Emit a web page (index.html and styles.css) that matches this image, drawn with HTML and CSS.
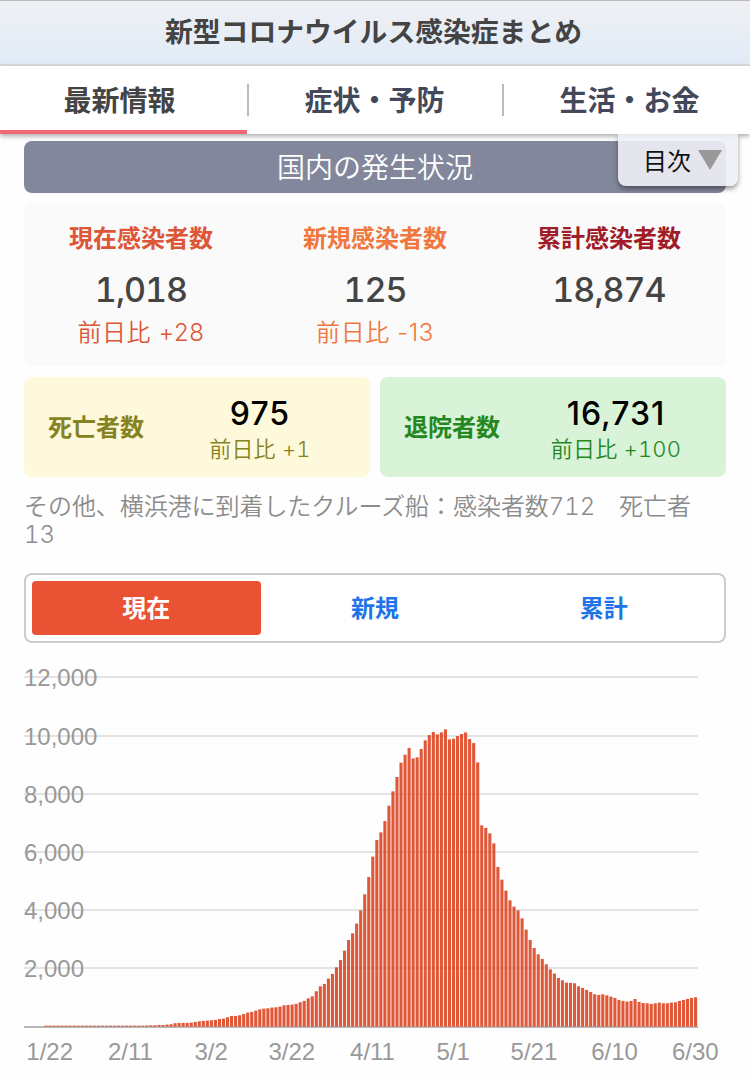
FILE: index.html
```
<!DOCTYPE html>
<html lang="ja">
<head>
  <meta charset="UTF-8" />
  <meta name="viewport" content="width=device-width, initial-scale=1" />
  <title>新型コロナウイルス感染症まとめ</title>
  <link rel="stylesheet" href="styles.css">
</head>
<body>
  <header>
    <h1>新型コロナウイルス感染症まとめ</h1>
  </header>

  <nav class="tabs">
    <a class="tab active">最新情報</a>
    <a class="tab">症状・予防</a>
    <a class="tab">生活・お金</a>
    <div class="toc">目次<svg width="24" height="20" viewBox="0 0 24 20"><path d="M0 0h24L12 20z" fill="#999"/></svg></div>
  </nav>

  <main>
    <h2>国内の発生状況</h2>

    <section class="summary">
      <div class="stat current">
        <h3>現在感染者数</h3>
        <p class="count">1,018</p>
        <p class="diff">前日比 +28</p>
      </div>
      <div class="stat new">
        <h3>新規感染者数</h3>
        <p class="count">125</p>
        <p class="diff">前日比 -13</p>
      </div>
      <div class="stat total">
        <h3>累計感染者数</h3>
        <p class="count">18,874</p>
      </div>
    </section>

    <section class="boxes">
      <div class="box death">
        <h3>死亡者数</h3>
        <div class="value">
          <p class="count">975</p>
          <p class="diff">前日比 +1</p>
        </div>
      </div>
      <div class="box discharged">
        <h3>退院者数</h3>
        <div class="value">
          <p class="count">16,731</p>
          <p class="diff">前日比 +100</p>
        </div>
      </div>
    </section>

    <p class="note">その他、横浜港に到着したクルーズ船：感染者数712　死亡者<br>13</p>

    <div class="switch">
      <button class="on">現在</button>
      <button>新規</button>
      <button>累計</button>
    </div>

    <svg id="chart" class="chart" width="726" height="438" viewBox="24 643 726 438"></svg>
  </main>

  <script src="chart.js"></script>
</body>
</html>
```

FILE: styles.css
```
:root {
  --text: #444;
  --current: #dd5638;
  --new: #f0773d;
  --total: #a11c27;
  --death: #85831f;
  --discharged: #25871f;
}

* {
  margin: 0;
  padding: 0;
  box-sizing: border-box;
}

body {
  width: 750px;
  height: 1081px;
  overflow: hidden;
  font-family: Inter, 'Noto Sans CJK JP', sans-serif;
  font-variant-numeric: tabular-nums;
  background: #fefefe;
  color: var(--text);
}

header {
  height: 66px;
  border-top: 1px solid #b9b9c0;
  border-bottom: 2px solid #dddde1;
  background: linear-gradient(#eff0f4, #e1ebf6);
  text-align: center;
}

h1 {
  font-size: 27.8px;
  font-weight: 700;
  line-height: 63px;
  padding-right: 3px;
}

.tabs {
  position: relative;
  display: flex;
  height: 68px;
  background: #fff;
  box-shadow: 0 2px 5px rgba(0, 0, 0, 0.35);
  z-index: 1;
}

.tab {
  position: relative;
  flex: 0 0 255px;
  padding-right: 2px;
  font-size: 28px;
  font-weight: 700;
  line-height: 70px;
  text-align: center;
  color: #43495a;
}

.tab.active {
  flex-basis: 248px;
  height: 68px;
  padding-right: 9px;
  color: var(--text);
}

.tab.active::before {
  content: '';
  position: absolute;
  left: 0;
  bottom: 0;
  width: 247px;
  height: 4px;
  background: #ed6872;
}

.tab:not(:last-of-type)::after {
  content: '';
  position: absolute;
  right: -1px;
  top: 18px;
  width: 2px;
  height: 32px;
  background: #bbb;
}

.toc {
  position: absolute;
  top: 68px;
  right: 12px;
  display: flex;
  align-items: center;
  gap: 7px;
  width: 120px;
  height: 52px;
  padding-left: 25px;
  padding-bottom: 1px;
  border-radius: 0 0 8px 8px;
  background: rgba(238, 240, 246, 0.9);
  box-shadow: 0 3px 5px rgba(0, 0, 0, 0.4);
  clip-path: inset(0 -10px -10px -10px);
  font-size: 24px;
  color: #111;
}

main {
  padding: 7px 0 0 24px;
}

h2 {
  width: 702px;
  height: 52px;
  border-radius: 8px;
  background: #82879c;
  color: #fff;
  font-size: 28px;
  font-weight: 350;
  line-height: 54px;
  text-align: center;
}

h3 {
  font-size: 24px;
  font-weight: 700;
}

.count {
  font-size: 34px;
  font-weight: 500;
}

.diff {
  font-size: 24px;
  font-weight: 350;
}

.summary {
  display: flex;
  width: 702px;
  height: 163px;
  margin-top: 10px;
  padding-top: 18px;
  border-radius: 8px;
  background: #fafafa;
  text-align: center;
}

.stat {
  flex: 1;
}

.stat h3 {
  line-height: 36px;
}

.stat .count {
  margin-top: 11px;
  line-height: 44px;
  letter-spacing: -1px;
}

.stat .diff {
  margin-top: 3px;
  line-height: 36px;
  letter-spacing: 0.6px;
  font-variant-numeric: normal;
}

.current h3,
.current .diff {
  color: var(--current);
}

.new h3,
.new .diff {
  color: var(--new);
}

.total h3 {
  color: var(--total);
}

.boxes {
  display: flex;
  gap: 10px;
  width: 702px;
  margin-top: 11px;
}

.box {
  display: flex;
  flex: 1;
  align-items: center;
  height: 100px;
  padding: 0 18px 3px 24px;
  border-radius: 8px;
}

.box .value {
  flex: 1;
  padding: 8px 0 0 24px;
  text-align: center;
  white-space: nowrap;
}

.box .count {
  font-size: 32px;
  line-height: 38px;
  letter-spacing: 1px;
  font-variant-numeric: normal;
  color: #000;
}

.box .diff {
  font-size: 22px;
  line-height: 32px;
  letter-spacing: 0.2px;
}

.death {
  background: #fef9da;
  color: var(--death);
}

.discharged {
  background: #d9f3d8;
  color: var(--discharged);
}

.note {
  margin-top: 16px;
  font-size: 24px;
  font-weight: 350;
  line-height: 28px;
  letter-spacing: -0.06px;
  color: #8c8c8c;
}

.switch {
  display: flex;
  width: 702px;
  height: 70px;
  margin-top: 24px;
  padding: 6px;
  border: 2px solid #ccc;
  border-radius: 8px;
  background: #fff;
}

.switch button {
  flex: 1;
  padding-bottom: 4px;
  border: none;
  border-radius: 4px;
  background: none;
  color: #2074e8;
  font-family: inherit;
  font-size: 24px;
  font-weight: 700;
}

.switch .on {
  background: #e95232;
  color: #fff;
}

.chart {
  display: block;
}

.chart text {
  font-family: 'Liberation Sans', Arial, sans-serif;
  font-size: 24px;
  fill: #999;
}

.chart .day {
  text-anchor: middle;
}

.chart .grid {
  stroke: #e3e3e3;
  stroke-width: 2;
}

.chart .axis {
  stroke: #b8b8b8;
  stroke-width: 2;
}

.chart .bar {
  fill: #de4a28;
  fill-opacity: 0.92;
}
```

FILE: chart.js
```
const data = [
  10, 10, 10, 10, 10, 10, 10, 12, 14, 16, 16, 18, 18, 18, 20, 20, 20, 20, 22, 22, 24, 24, 26, 28, 30,
  40, 46, 46, 57, 57, 69, 80, 115, 126, 126,
  126, 137, 160, 183, 195, 206, 218, 229, 263, 275,
  321, 366, 366, 389, 435, 481, 504, 550, 595, 618,
  630, 653, 664, 687, 733, 744, 756, 779, 836, 882, 973,
  1042, 1214, 1385, 1466, 1649, 1809, 2038, 2290, 2611, 2977,
  3206, 3538, 3996, 4546, 5141, 5840, 6412, 6675, 7065, 7591,
  8084, 8576, 9068, 9343, 9572, 9217, 9252, 9538, 9836, 10019, 10122, 10042,
  10110, 10213, 9870, 9893, 9984, 10053, 10110, 9881, 9744, 9080,
  6916, 6824, 6641, 6298, 5485, 5049, 4672, 4340, 4122, 3996,
  3721, 3332, 2977, 2702, 2485, 2324, 2141, 1969,
  1821, 1672, 1592, 1511, 1500, 1489, 1385, 1328, 1260, 1191,
  1111, 1088, 1111, 1076, 1031, 985, 916, 882, 859, 882,
  950, 847, 813, 802, 779, 802, 824, 802, 802, 824,
  836, 882, 916, 950, 985, 1008
];
const days = ['1/22', '2/11', '3/2', '3/22', '4/11', '5/1', '5/21', '6/10', '6/30'];

const left = 24;
const right = 698;
const base = 1026.6;
const step = 4.035;
const scale = 58.2 / 2000;

let html = '';

for (let v = 2000; v <= 12000; v += 2000) {
  const y = Math.round(base - v * scale);
  html += `<line class="grid" x1="${left}" x2="${right}" y1="${y}" y2="${y}"/>`;
  html += `<text x="${left}" y="${y + 8.5}">${v.toLocaleString('en-US')}</text>`;
}

html += `<line class="axis" x1="${left}" x2="${right}" y1="1027" y2="1027"/>`;

data.forEach((v, i) => {
  const h = Math.max(v * scale, 1);
  const x = 44.4 + i * step;
  html += `<rect class="bar" x="${x.toFixed(2)}" y="${(base - h).toFixed(2)}" width="3.1" height="${h.toFixed(2)}"/>`;
});

days.forEach((d, i) => {
  html += `<text class="day" x="${(49.7 + i * 80.7).toFixed(1)}" y="1060">${d}</text>`;
});

document.getElementById('chart').innerHTML = html;
```
